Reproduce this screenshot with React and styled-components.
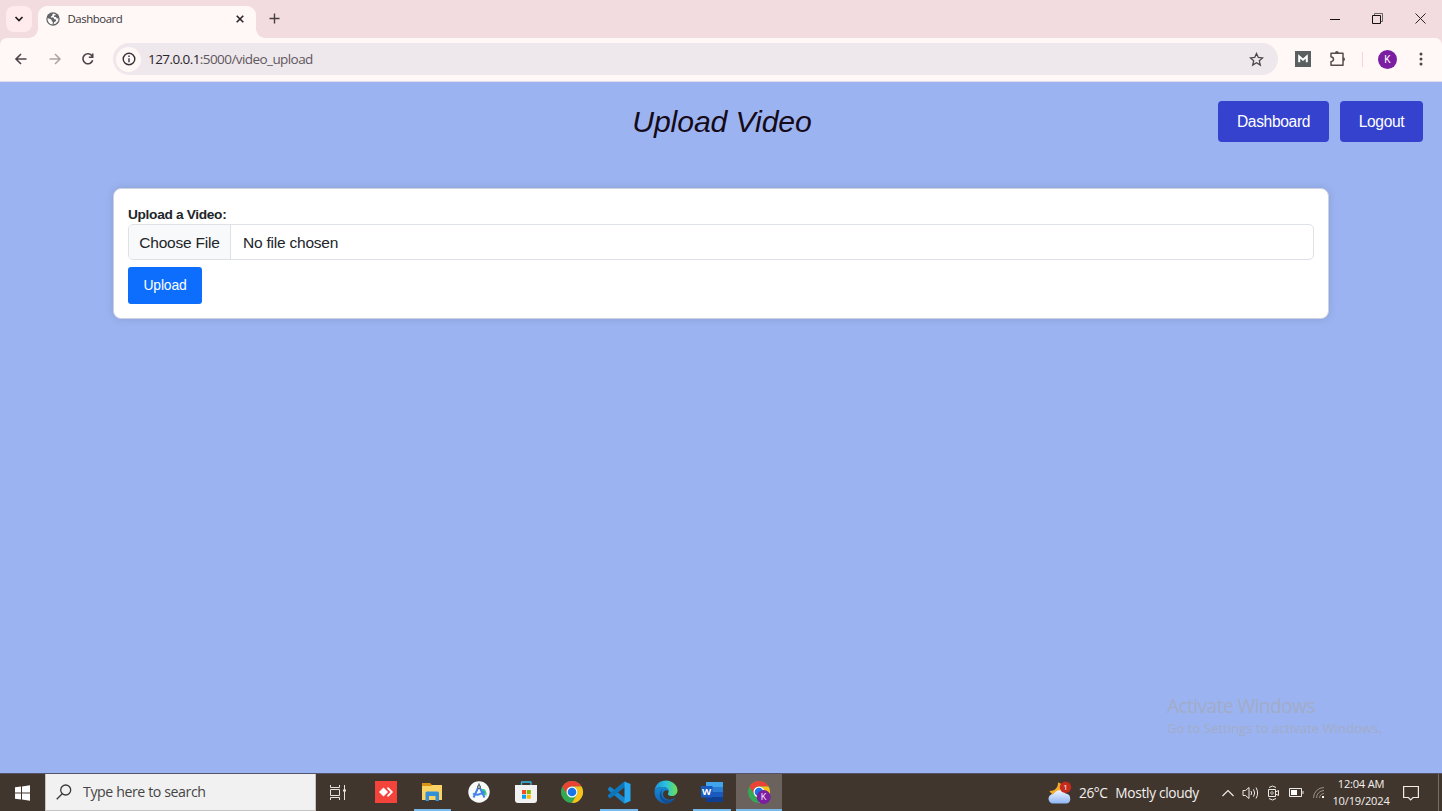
import React from 'react';
import styled, { createGlobalStyle, css } from 'styled-components';

const GlobalStyle = createGlobalStyle`
  *, *::before, *::after { box-sizing: border-box; }
  html, body { margin: 0; padding: 0; overflow: hidden; }
  button { font: inherit; border: 0; padding: 0; background: none; color: inherit; letter-spacing: inherit; }
  svg { display: block; flex: none; }
`;

const segoe = css`font-family: "Open Sans", "Noto Sans", sans-serif;`;

const Screen = styled.div`
  display: flex;
  flex-direction: column;
  width: 1442px;
  height: 811px;
  background: #9bb4f1;
  overflow: hidden;
`;

/* Browser chrome */
const TabStrip = styled.div`
  display: flex;
  height: 38px;
  flex: none;
  background: #f3dcdf;
  padding-left: 6px;
`;
const TabSearch = styled.button`
  width: 26px;
  height: 26px;
  margin-top: 6px;
  border-radius: 8px;
  background: #ffebed;
  display: grid;
  place-items: center;
`;
const Tab = styled.div`
  position: relative;
  display: flex;
  align-items: center;
  width: 218px;
  height: 32px;
  margin: 6px 0 0 6px;
  padding: 0 11px 6px 8px;
  border-radius: 9px 9px 0 0;
  background: #fff8f6;
  &::before, &::after {
    content: "";
    position: absolute;
    bottom: 0;
    width: 9px;
    height: 9px;
  }
  &::before { left: -9px; background: radial-gradient(circle at 0 0, transparent 8.5px, #fff8f6 9px); }
  &::after { right: -9px; background: radial-gradient(circle at 100% 0, transparent 8.5px, #fff8f6 9px); }
`;
const Label = styled.span`
  ${segoe}
  white-space: nowrap;
  line-height: 1;
  font-size: ${p => p.$size}px;
  letter-spacing: ${p => p.$track || 0}px;
  color: ${p => p.$color || 'inherit'};
`;
const TabTitle = styled(Label)`
  flex: 1;
  margin-left: 7.5px;
`;
const NewTab = styled.button`
  width: 37px;
  height: 37px;
  display: grid;
  place-items: center;
`;
const WindowControls = styled.div`
  display: flex;
  margin-left: auto;
  height: 37px;
  align-items: center;
  gap: 32px;
  padding-right: 16px;
`;
const ToolbarBack = styled.div`
  background: #f3dcdf;
  flex: none;
`;
const Toolbar = styled.div`
  display: flex;
  align-items: center;
  height: 44px;
  border-radius: 7px 7px 0 0;
  background: #fff8f6;
  border-bottom: 1px solid #e4dcea;
  padding: 0 14px 1px 13px;
`;
const NavButtons = styled.div`
  display: flex;
  gap: 17.5px;
  width: 100px;
`;
const AddressBar = styled.div`
  display: flex;
  align-items: center;
  width: 1165px;
  height: 32px;
  border-radius: 16px;
  background: #eee7eb;
  padding: 0 14px 0 3px;
`;
const SiteInfo = styled.div`
  display: grid;
  place-items: center;
  width: 25px;
  height: 25px;
  margin-right: 7px;
  border-radius: 50%;
  background: #fff8f6;
`;
const Url = styled(Label)`
  flex: 1;
  padding-top: 1px;
  b { color: #29262a; font-weight: 400; }
`;
const ToolbarRight = styled.div`
  display: flex;
  align-items: center;
  flex: 1;
  padding-left: 17px;
`;
const ExtensionsIcon = styled.div`
  margin-left: 18px;
`;
const Divider = styled.i`
  width: 1px;
  height: 15px;
  margin: 0 15px 0 15px;
  background: #f8d4da;
`;
const Avatar = styled.span`
  display: grid;
  place-items: center;
  width: 19px;
  height: 19px;
  margin-right: 22px;
  border-radius: 50%;
  background: #7b1fa2;
  color: #fff;
  font: 10px Roboto, sans-serif;
`;

/* Web page */
const Page = styled.main`
  position: relative;
  flex: 1;
  font-family: "Liberation Sans", Arial, sans-serif;
`;
const Header = styled.header`
  display: grid;
  grid-template-columns: 1fr auto 1fr;
  align-items: center;
  height: 41px;
  margin: 19px 19px 0 19px;
`;
const Title = styled.h1`
  grid-column: 2;
  margin: 1px 0 0 2px;
  color: #160a18;
  font-size: 30.2px;
  font-style: italic;
  font-weight: 400;
  line-height: 36px;
  letter-spacing: -0.1px;
`;
const HeaderLinks = styled.nav`
  display: flex;
  justify-content: flex-end;
  gap: 11px;
`;
const NavLink = styled.button`
  width: ${p => p.$width}px;
  height: 41px;
  border-radius: 4px;
  background: #3442ce;
  color: #fff;
  font-size: 15.6px;
  letter-spacing: -0.35px;
`;
const Card = styled.section`
  width: 1216px;
  height: 131px;
  margin: 46px 0 0 113px;
  padding: 17px 14px 0;
  border: 1px solid #ced1df;
  border-radius: 8px;
  background: #fff;
  box-shadow: 0 0 9px rgba(0, 0, 0, .12);
`;
const FieldLabel = styled.label`
  display: block;
  height: 18px;
  color: #212529;
  font-size: 13.7px;
  font-weight: 700;
  line-height: 17px;
  letter-spacing: -0.32px;
`;
const FileField = styled.div`
  display: flex;
  height: 36px;
  border: 1px solid #dee2e6;
  border-radius: 5px;
  overflow: hidden;
  font-size: 15.5px;
  letter-spacing: -0.22px;
  line-height: 35px;
  color: #212529;
`;
const ChooseFile = styled.button`
  width: 102px;
  border-right: 1px solid #dee2e6;
  background: #f8f9fa;
`;
const FileName = styled.span`
  padding-left: 12px;
`;
const SubmitButton = styled.button`
  display: block;
  width: 74px;
  height: 37px;
  margin-top: 7px;
  padding-bottom: 2px;
  border-radius: 3px;
  background: #0d6efd;
  color: #fff;
  font-size: 13.9px;
  letter-spacing: -0.15px;
`;
const Watermark = styled.aside`
  position: absolute;
  left: 1167px;
  top: 614px;
  display: flex;
  flex-direction: column;
  gap: 7px;
  color: #a2abc8;
`;

/* Taskbar */
const Taskbar = styled.footer`
  display: flex;
  height: 38px;
  flex: none;
  background: #41362e;
  border-top: 1px solid #555369;
  color: #f4f1ee;
`;
const StartButton = styled.button`
  width: 45px;
  display: grid;
  place-items: center;
`;
const SearchBox = styled.div`
  display: flex;
  align-items: center;
  width: 271px;
  padding-left: 10px;
  gap: 11px;
  border: 1px solid #c5c3c1;
  border-top: 0;
  background: #f1f1f1;
`;
const TaskView = styled.button`
  display: grid;
  place-items: center;
  width: 46.5px;
  padding-right: 2px;
`;
const Apps = styled.div`
  display: flex;
`;
const AppSlot = styled.div`
  display: flex;
  justify-content: center;
  align-items: center;
  position: relative;
  width: 46.65px;
  padding-bottom: 1px;
  background: ${p => (p.$active ? '#6b625d' : 'transparent')};
  &::after {
    content: "";
    display: ${p => (p.$open || p.$active ? 'block' : 'none')};
    position: absolute;
    bottom: 0;
    left: ${p => (p.$active ? 0 : 4.5)}px;
    right: ${p => (p.$active ? 0 : 4.5)}px;
    height: 2px;
    background: #76b9ed;
  }
`;
const Weather = styled.div`
  display: flex;
  align-items: center;
  margin-left: auto;
  width: 174px;
`;
const Conditions = styled.div`
  display: flex;
  gap: 8px;
  margin-left: 7px;
`;
const Tray = styled.div`
  display: flex;
  align-items: center;
  gap: 8.2px;
  width: 110px;
`;
const Clock = styled.div`
  display: flex;
  flex-direction: column;
  align-items: center;
  width: 58px;
  padding-top: 4px;
  gap: 6px;
`;
const Notifications = styled.div`
  display: flex;
  align-items: center;
  width: 49px;
  padding-left: 13px;
  border-right: 1px solid #756d67;
  margin-right: 3px;
`;

const Icon = ({ w, h = w, box, children, ...rest }) => (
  <svg width={w} height={h} viewBox={box || `0 0 ${w} ${h}`} fill="none" {...rest}>{children}</svg>
);

const Globe = () => (
  <Icon w={14} box="0 0 14 14">
    <circle cx="7" cy="7" r="6.7" fill="#5f6468" />
    <path d="M7.5 1.5 6.2 2.6 6.4 3.7 4.8 4.5 5 5.5 7.5 5.6 8.2 7.2 10 7.5 10 9 8.3 10 7.5 12.3 9.6 11.7 12.3 9 12.4 6.5 10.7 6.3 10 5 8 4.8 8 3.6 9.5 3.3 9.6 2.2ZM1.5 6.3 4 6.7 5.7 8 5.8 9.3 7 10 6.5 12.5A5.5 5.5 0 0 1 1.5 6.3Z" fill="#fff8f6" />
  </Icon>
);

const ChromeLogo = ({ badge }) => (
  <Icon w={24} box="0 0 24 24">
    <circle cx="12" cy="12" r="11" fill="#34a853" />
    <path d="M2.47 6.5A11 11 0 0 1 21.53 6.5H12A5.5 5.5 0 0 0 7.24 14.75Z" fill="#ea4335" />
    <path d="M21.53 6.5A11 11 0 0 1 12 23L16.76 14.75A5.5 5.5 0 0 0 12 6.5Z" fill="#fbc116" />
    <circle cx="12" cy="12" r="5.5" fill="#fff" />
    <circle cx="12" cy="12" r="4.3" fill="#1a73e8" />
    {badge && <><circle cx="16.7" cy="17" r="7" fill="#7b1fa2" /><text x="16.7" y="20.3" textAnchor="middle" fontFamily="Roboto, sans-serif" fontSize="9" fill="#f1dff5">K</text></>}
  </Icon>
);

const AnyDesk = () => (
  <Icon w={22}>
    <path d="M0 0H22V22H0Z" fill="#f4433a" />
    <path d="m8.5 6.5 4.5 4.5-4.5 4.5L4 11Z" fill="#fff" />
    <path d="m12.5 6.7 4.3 4.3-4.3 4.3" stroke="#fff" strokeWidth="1.8" />
  </Icon>
);
const Folder = () => (
  <Icon w={22} h={20}>
    <path d="M1 1h8l2 2h10v5H1Z" fill="#d99316" />
    <path d="M1 4h9l1-1h10v15H1Z" fill="#fbd364" />
    <path d="M4.500 19V11Q4.500 9.500 6 9.500H16.500Q18 9.500 18 11V19H14.500V14H8V19Z" fill="#338fd6" />
  </Icon>
);
const AndroidStudio = () => (
  <Icon w={24}>
    <circle cx="12" cy="12" r="10.7" fill="#f8faf9" />
    <path d="M13 9h4q3 1.5 2.5 6.5l-3-.5Z" fill="#3bd081" />
    <path d="M11.5 7 6.5 17.500M12.500 7 17.500 17.500M6 13.500C9 15.500 14 15 17.500 11.500" stroke="#4280ea" strokeWidth="2" />
    <circle cx="12" cy="7" r="2" fill="#57606a" /><path d="M12 3.500v3" stroke="#57606a" strokeWidth="1.5" />
    <circle cx="12" cy="7" r=".8" fill="#fff" />
  </Icon>
);
const Store = () => (
  <Icon w={22} h={23}>
    <path d="M6.500 5V1.500Q6.500 1 7 1H15.500Q16 1 16 1.500V5" stroke="#36b7ea" strokeWidth="1.3" />
    <path d="M0 4H22V19Q22 22 19 22H3Q0 22 0 19Z" fill="#f1f1f1" />
    <path d="M7 9h4v4H7Z" fill="#f25022" /><path d="M11.800 9h4v4h-4Z" fill="#7fba00" />
    <path d="M7 13.700h4v4H7Z" fill="#00a4ef" /><path d="M11.800 13.700h4v4h-4Z" fill="#ffb900" />
  </Icon>
);
const VSCode = () => (
  <Icon w={23}>
    <path d="M0 7.500 2 5.500 17 17V22.500L15.500 22 0 9Z" fill="#1684cb" />
    <path d="M0 15.500 2 17.500 17 6V.5L15.500 1 0 14Z" fill="#0d75b9" />
    <path d="M16.5.5 22.500 3V20L16.500 22.500Z" fill="#27a9f1" />
  </Icon>
);
const Edge = () => (
  <Icon w={24}>
    <defs>
      <linearGradient id="edgeTop" x1="0" x2="1"><stop stopColor="#218fd8" /><stop offset=".5" stopColor="#29c3dd" /><stop offset="1" stopColor="#70e04f" /></linearGradient>
      <linearGradient id="edgeBody" x1="0" x2="0" y2="1"><stop stopColor="#168bd3" /><stop offset="1" stopColor="#1160b6" /></linearGradient>
    </defs>
    <path d="M.6 11C1.200 4.500 5.800 .6 12 .6C19 .6 23.500 5.800 23.500 10.500C23.500 14 20.800 16 18 16C14.800 16 13.200 14.600 14.300 13C15.600 10.500 13.500 7 8.500 7C4.500 7 2 8.500 .6 11Z" fill="url(#edgeTop)" />
    <path d="M.6 11C2 8.200 5 7 8.500 7C12 7 14.500 9 14.700 11C12.500 9.200 9 10.500 9 14C9 19 15 21.500 21 18C19 21.500 16 23.400 12 23.400C5 23.400 0 18 .6 11Z" fill="url(#edgeBody)" />
    <path d="M9.500 8.500C5 13 8 20 14 20.500C17 20.800 20 19.500 21.500 17.700C19 22 15 23.700 11.500 23.300C4.500 20.500 4 12 9.500 8.500Z" fill="#124f92" />
  </Icon>
);
const Word = () => (
  <Icon w={24} h={22}>
    <path d="M6 1H23V6H6Z" fill="#41a5ee" /><path d="M6 6H23V11H6Z" fill="#2b7cd3" />
    <path d="M6 11H23V16H6Z" fill="#185abd" /><path d="M6 16H23V21H6Z" fill="#103f91" />
    <path d="M1 5H12.500V16.500H1Z" fill="#185abd" />
    <text x="6.7" y="14" textAnchor="middle" fontFamily="Open Sans, sans-serif" fontWeight="700" fontSize="9.5" fill="#fff">W</text>
  </Icon>
);

const apps = [
  { name: 'anydesk', art: <AnyDesk /> },
  { name: 'files', art: <Folder />, open: true },
  { name: 'studio', art: <AndroidStudio /> },
  { name: 'store', art: <Store /> },
  { name: 'chrome', art: <ChromeLogo /> },
  { name: 'code', art: <VSCode />, open: true },
  { name: 'edge', art: <Edge /> },
  { name: 'word', art: <Word />, open: true },
  { name: 'chrome-profile', art: <ChromeLogo badge />, active: true },
];

function Browser() {
  return (
    <>
      <TabStrip>
        <TabSearch><Icon w={10} h={8}><path d="m1.5 2 3.5 3.500L8.500 2" stroke="#231a1c" strokeWidth="1.7" /></Icon></TabSearch>
        <Tab>
          <Globe />
          <TabTitle $size={11.4} $track={-0.45} $color="#39363a">Dashboard</TabTitle>
          <Icon w={10}><path d="m1.700 1.700 6.600 6.600m0-6.600L1.700 8.300" stroke="#292529" strokeWidth="1.6" /></Icon>
        </Tab>
        <NewTab><Icon w={11}><path d="M5.500.5v10M.5 5.500h10" stroke="#463d40" strokeWidth="1.4" /></Icon></NewTab>
        <WindowControls>
          <Icon w={10} stroke="#151113"><path d="M0 5.500h10" /></Icon>
          <Icon w={11} stroke="#151113"><path d="M2.500 2.500v-2h8v8h-2" stroke="#6d6264" /><path d="M.5 2.500h8v8h-8Z" /></Icon>
          <Icon w={11} stroke="#282325"><path d="m.5.5 10 10m0-10-10 10" /></Icon>
        </WindowControls>
      </TabStrip>
      <ToolbarBack>
        <Toolbar>
          <NavButtons>
            <Icon w={16} stroke="#4d4448" strokeWidth="1.6"><path d="M13.500 8H3M8 3 3 8l5 5" /></Icon>
            <Icon w={16} stroke="#aaa4a6" strokeWidth="1.5"><path d="M2.500 8H13M8 3l5 5-5 5" /></Icon>
            <Icon w={16} stroke="#4d4448" strokeWidth="1.6"><path d="M12.100 5A5 5 0 1 0 12.700 9.300M12.700 2.500v3.800H8.800" /></Icon>
          </NavButtons>
          <AddressBar>
            <SiteInfo><Icon w={14}><circle cx="7" cy="7" r="5.8" stroke="#353137" strokeWidth="1.4" /><path d="M7 6.200v4M7 3.500v1.400" stroke="#353137" strokeWidth="1.4" /></Icon></SiteInfo>
            <Url $size={13.5} $track={-0.57} $color="#5e5860"><b>127.0.0.1</b>:5000/video_upload</Url>
            <Icon w={15}><path d="m7.500 1.500 1.800 4 4.300.4-3.300 2.900 1 4.300-3.800-2.300-3.800 2.300 1-4.300L1.400 5.900l4.300-.4Z" stroke="#4b454c" strokeWidth="1.3" /></Icon>
          </AddressBar>
          <ToolbarRight>
            <Icon w={16}><path d="M0 0H16V16H0Z" fill="#59605f" /><path d="M4.200 11.300V5.500L8 8.800l3.800-3.300v5.800" stroke="#fff" strokeWidth="2" /></Icon>
            <ExtensionsIcon>
              <Icon w={18}><path d="M2 3.200h12v12H2v-3.500q2.500-.5 2.500-2.500T2 6.700Z" stroke="#594c4d" strokeWidth="1.5" strokeLinejoin="round" /><path d="M6 3a1.900 2 0 0 1 3.800 0M14 7.200a2 2 0 0 1 0 4" fill="#594c4d" /></Icon>
            </ExtensionsIcon>
            <Divider />
            <Avatar>K</Avatar>
            <Icon w={4} h={14}><circle cx="2" cy="2" r="1.5" fill="#514448" /><circle cx="2" cy="7" r="1.5" fill="#514448" /><circle cx="2" cy="12" r="1.5" fill="#514448" /></Icon>
          </ToolbarRight>
        </Toolbar>
      </ToolbarBack>
    </>
  );
}

export default function App() {
  return (
    <Screen>
      <GlobalStyle />
      <Browser />
      <Page>
        <Header>
          <Title>Upload Video</Title>
          <HeaderLinks>
            <NavLink $width={111}>Dashboard</NavLink>
            <NavLink $width={83}>Logout</NavLink>
          </HeaderLinks>
        </Header>
        <Card>
          <FieldLabel>Upload a Video:</FieldLabel>
          <FileField><ChooseFile>Choose File</ChooseFile><FileName>No file chosen</FileName></FileField>
          <SubmitButton>Upload</SubmitButton>
        </Card>
        <Watermark>
          <Label $size={19.2} $track={-0.6}>Activate Windows</Label>
          <Label $size={13.2} $track={-0.04}>Go to Settings to activate Windows.</Label>
        </Watermark>
      </Page>
      <Taskbar>
        <StartButton><Icon w={15} h={16}><path d="M0 2.300 6 1.500V7.500H0ZM7 1.400 15 .3V7.500H7ZM0 8.500H6v6L0 13.700ZM7 8.500h8V15.700L7 14.600Z" fill="#fff" /></Icon></StartButton>
        <SearchBox>
          <Icon w={16}><circle cx="9.7" cy="6" r="5" stroke="#393939" strokeWidth="1.3" /><path d="M6.200 9.700.7 15.200" stroke="#393939" strokeWidth="1.3" /></Icon>
          <Label $size={14.2} $track={-0.42} $color="#454545">Type here to search</Label>
        </SearchBox>
        <TaskView><Icon w={17} h={15} stroke="#e6e2df"><path d="M.5 0v2.500h9V0M.5 15v-2.500h9V15M.5 4.500h9v6h-9ZM14.500 0v15" /><path d="M13 4.500h3v2h-3Z" fill="#e6e2df" stroke="none" /></Icon></TaskView>
        <Apps>
          {apps.map(a => <AppSlot key={a.name} $open={a.open} $active={a.active}>{a.art}</AppSlot>)}
        </Apps>
        <Weather>
          <Icon w={24} h={24}>
            <defs><linearGradient id="cloud" x2="0" y2="1"><stop stopColor="#f1f5ff" /><stop offset="1" stopColor="#8eb5f4" /></linearGradient></defs>
            <path d="M10 1.500C10 7 7 10 1.500 10C4 16 15 15 15.500 8C15.500 5 13 2 10 1.500Z" fill="#f4ad2b" />
            <path d="M5 22.500A4.700 4.700 0 0 1 5.500 13A7 7 0 0 1 17.500 12.500A5.200 5.200 0 0 1 19 22.500Z" fill="url(#cloud)" />
            <circle cx="17.5" cy="6.2" r="5.7" fill="#c42b1c" />
            <text x="17.5" y="9.2" textAnchor="middle" fontFamily="Open Sans, sans-serif" fontSize="8" fill="#fff">1</text>
          </Icon>
          <Conditions>
            <Label $size={13.7} $track={-0.45}>26°C</Label>
            <Label $size={13.7} $track={-0.32}>Mostly cloudy</Label>
          </Conditions>
        </Weather>
        <Tray>
          <Icon w={12} h={8} stroke="#eeeae7" strokeWidth="1.2"><path d="m.5 7 5.500-5.500L11.500 7" /></Icon>
          <Icon w={17} h={14} stroke="#eeeae7"><path d="M1 4.500h2.500L7 1.500v11l-3.500-3H1ZM9 5q1.300 2 0 4M11.500 3.300q2.300 3.700 0 7.400M14 1.500q3.200 5.500 0 11" /></Icon>
          <Icon w={13} h={16} stroke="#eeeae7"><path d="M1.500 4.500h7v7h-7ZM8.500 7l3-1.500v5L8.500 9M2 2.500q3.500-3 7 0M2 13.500q3.500 3 7 0" /><circle cx="5" cy="8" r="1.3" strokeWidth=".7" /></Icon>
          <Icon w={15} h={11} stroke="#eeeae7"><path d="M.5 1.500h12v8H.5ZM14 4v3" /><path d="M2 3h6v5H2Z" fill="#fff" stroke="none" /></Icon>
          <Icon w={13} h={13} stroke="#99918b"><path d="M1.500 12A10.500 10.500 0 0 1 12 1.500M4.500 12A7.500 7.500 0 0 1 12 4.500M7.500 12A4.500 4.500 0 0 1 12 7.500" /><path d="M10 10h2v2h-2Z" fill="#fff" stroke="none" /></Icon>
        </Tray>
        <Clock>
          <Label $size={11.1} $track={-0.22}>12:04 AM</Label>
          <Label $size={11.1} $track={-0.17}>10/19/2024</Label>
        </Clock>
        <Notifications><Icon w={16} h={16} stroke="#f0ece9" strokeWidth="1.2"><path d="M.6 1.500h14.800v11H10l-2.300 2.300-2.300-2.300H.6Z" /></Icon></Notifications>
      </Taskbar>
    </Screen>
  );
}
